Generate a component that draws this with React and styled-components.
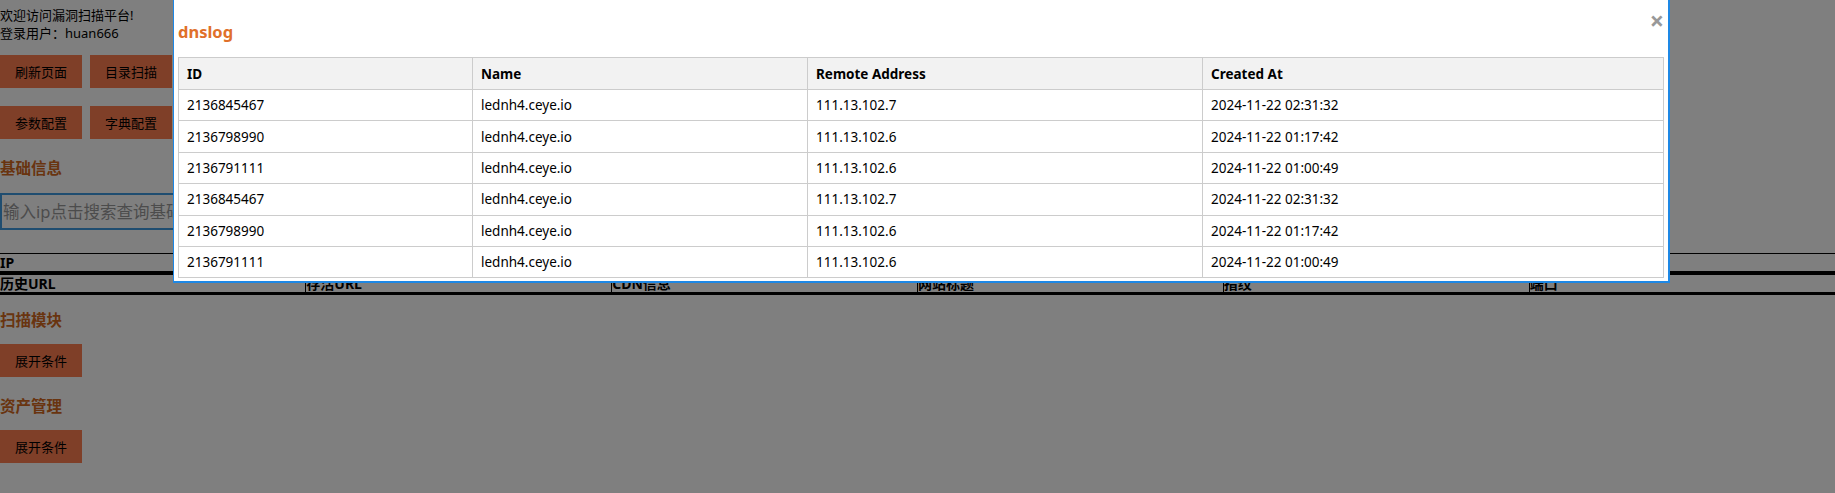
import React from "react";
import styled, { createGlobalStyle } from "styled-components";

const GlobalStyle = createGlobalStyle`
  body {
    margin: 0;
    background: #fff;
    font-family: "Noto Sans", "Noto Sans CJK SC", sans-serif;
    color: #000;
  }
`;

const logs = [
  ["2136845467", "lednh4.ceye.io", "111.13.102.7", "2024-11-22 02:31:32"],
  ["2136798990", "lednh4.ceye.io", "111.13.102.6", "2024-11-22 01:17:42"],
  ["2136791111", "lednh4.ceye.io", "111.13.102.6", "2024-11-22 01:00:49"],
  ["2136845467", "lednh4.ceye.io", "111.13.102.7", "2024-11-22 02:31:32"],
  ["2136798990", "lednh4.ceye.io", "111.13.102.6", "2024-11-22 01:17:42"],
  ["2136791111", "lednh4.ceye.io", "111.13.102.6", "2024-11-22 01:00:49"],
];

const assetCols = ["历史URL", "存活URL", "CDN信息", "网站标题", "指纹", "端口"];

const App = () => {
  return <Page>
    <GlobalStyle />
    <Welcome>
      <div>欢迎访问漏洞扫描平台!</div>
      <div>登录用户：huan666</div>
    </Welcome>

    <ButtonRow $top={13}>
      <Button>刷新页面</Button>
      <Button>目录扫描</Button>
    </ButtonRow>
    <ButtonRow $top={18}>
      <Button>参数配置</Button>
      <Button>字典配置</Button>
    </ButtonRow>

    <Section $top={17}>基础信息</Section>
    <SearchInput placeholder="输入ip点击搜索查询基础信息" />

    <InfoTable>
      <tbody>
        <tr>
          <InfoHead colSpan={6}>IP</InfoHead>
        </tr>
        <tr>
          {assetCols.map((c) => <InfoCell key={c}>{c}</InfoCell>)}
        </tr>
      </tbody>
    </InfoTable>

    <Section $top={13}>扫描模块</Section>
    <Button $block>展开条件</Button>
    <Section $top={17}>资产管理</Section>
    <Button $block>展开条件</Button>

    {/* dnslog modal */}
    <Overlay />
    <Modal>
      <ModalTitle>dnslog</ModalTitle>
      <Close>×</Close>
      <LogTable>
        <colgroup>
          <col style={{ width: 294 }} />
          <col style={{ width: 335 }} />
          <col style={{ width: 395 }} />
          <col />
        </colgroup>
        <thead>
          <tr>
            <LogTh>ID</LogTh>
            <LogTh>Name</LogTh>
            <LogTh>Remote Address</LogTh>
            <LogTh>Created At</LogTh>
          </tr>
        </thead>
        <tbody>
          {logs.map((row, i) => (
            <tr key={i}>
              {row.map((v, j) => <LogTd key={j}>{v}</LogTd>)}
            </tr>
          ))}
        </tbody>
      </LogTable>
    </Modal>
  </Page>
};

// Styled Components
const Page = styled.div`
  position: relative;
  min-height: 493px;
  font-size: 13px;
`;

const Welcome = styled.div` // greeting lines
  padding-top: 6px;
  line-height: 18px;
  font-size: 13px;
`;

const ButtonRow = styled.div`
  display: flex;
  gap: 8px;
  margin-top: ${(p) => p.$top}px;
`;

const Button = styled.button`
  display: ${(p) => (p.$block ? "block" : "inline-block")};
  margin-top: ${(p) => (p.$block ? "12px" : "0")};
  width: 82px;
  height: 33px;
  border: none;
  background: #ff7f50;
  color: #000;
  font-family: inherit;
  font-size: 13px;
  padding: 0;
`;

const Section = styled.h3`
  margin: ${(p) => p.$top}px 0 0;
  font-size: 15.5px;
  line-height: 24px;
  font-weight: bold;
  color: #d2691e;
`;

const SearchInput = styled.input`
  display: block;
  margin-top: 13px;
  box-sizing: border-box;
  width: 420px;
  height: 37px;
  border: 2px solid #3e9be0;
  padding: 0 1px;
  font-family: inherit;
  font-size: 16.5px;
  background: #fff;
  &::placeholder {
    color: #999;
  }
`;

const InfoTable = styled.table`
  margin-top: 23px;
  width: 100%;
  border-collapse: collapse;
  table-layout: fixed;
  border-top: 1px solid #000;
`;

const InfoHead = styled.th`
  text-align: left;
  padding: 0;
  height: 17px;
  line-height: 17px;
  font-size: 14px;
  border-bottom: 4px solid #000;
`;

const InfoCell = styled.td`
  padding: 0;
  height: 17px;
  line-height: 17px;
  font-weight: bold;
  font-size: 14px;
  border-bottom: 3px solid #000;
  & + & {
    border-left: 1px solid #000;
  }
`;

const Overlay = styled.div`
  position: fixed;
  inset: 0;
  background: rgba(0, 0, 0, 0.5);
`;

const Modal = styled.div`
  position: absolute;
  left: 173px;
  top: -4px;
  width: 1497px;
  box-sizing: border-box;
  background: #fff;
  border: 2px solid #1e88e5;
  border-left-width: 1px;
  padding: 0 4px 3px;
`;

const ModalTitle = styled.h2`
  margin: 0;
  padding: 22px 0 0 0;
  height: 38px;
  box-sizing: border-box;
  line-height: 24px;
  font-size: 16.5px;
  font-weight: bold;
  color: #e0702a;
`;

const Close = styled.span`
  position: absolute;
  right: 4px;
  top: 8px;
  font-size: 25px;
  line-height: 28px;
  color: #999;
  font-weight: bold;
`;

const LogTable = styled.table`
  margin-top: 21px;
  width: 100%;
  border-collapse: collapse;
  table-layout: fixed;
  font-size: 13.5px;
`;

const LogTh = styled.th`
  text-align: left;
  background: #f2f2f2;
  border: 1px solid #ccc;
  height: 31px;
  padding: 0 8px;
  font-weight: bold;
`;

const LogTd = styled.td`
  border: 1px solid #ccc;
  height: 30.4px;
  padding: 0 8px;
`;

export default App;
